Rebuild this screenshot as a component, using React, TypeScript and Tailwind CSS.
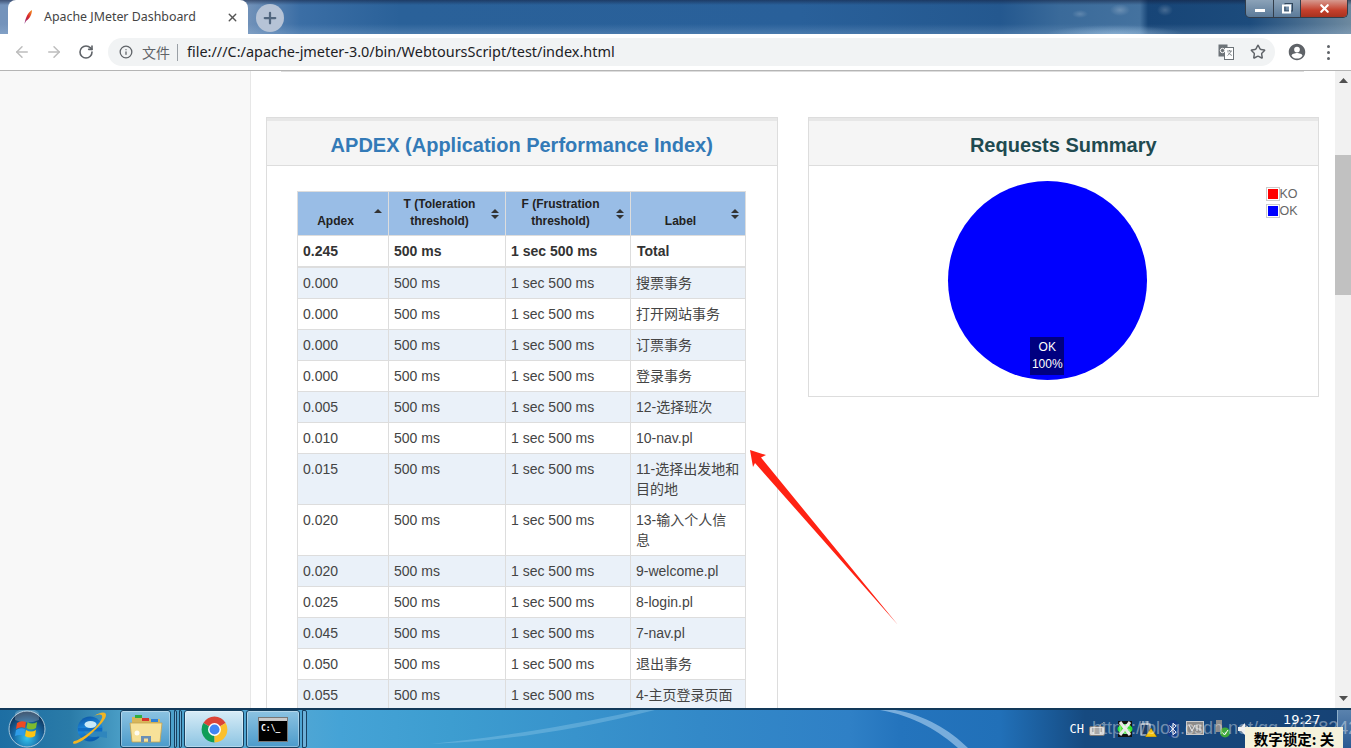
import React from "react";
import { ArrowLeft, ArrowRight, RotateCw, Info, Star, Plus, X } from "lucide-react";

const SANS = "font-['Liberation_Sans','Noto_Sans_CJK_SC',sans-serif]";

const rows: [string, string][] = [
  ["0.000", "搜票事务"],
  ["0.000", "打开网站事务"],
  ["0.000", "订票事务"],
  ["0.000", "登录事务"],
  ["0.005", "12-选择班次"],
  ["0.010", "10-nav.pl"],
  ["0.015", "11-选择出发地和\n目的地"],
  ["0.020", "13-输入个人信\n息"],
  ["0.020", "9-welcome.pl"],
  ["0.025", "8-login.pl"],
  ["0.045", "7-nav.pl"],
  ["0.050", "退出事务"],
  ["0.055", "4-主页登录页面"],
];

function SortIcon({ up }: { up?: boolean }) {
  return (
    <svg width="8" height="12" viewBox="0 0 8 12" className="absolute right-[6px] top-[16px]">
      <path d="M0 5 L4 1 L8 5 Z" fill="#333" />
      {!up && <path d="M0 7 L4 11 L8 7 Z" fill="#333" />}
    </svg>
  );
}

function Th({ children, up }: { children: React.ReactNode; up?: boolean }) {
  return (
    <th className="relative border border-[#ddd] bg-[#99bde6] pb-[5px] pl-[5px] pr-[20px] pt-[4px] text-center align-bottom text-[12px] font-bold leading-[17px] text-[#222]">
      {children}
      <SortIcon up={up} />
    </th>
  );
}

function Panel({ title, titleClass, children }: { title: string; titleClass: string; children: React.ReactNode }) {
  return (
    <div className="border border-[#ddd] bg-white">
      <div className={`h-[48px] border-b border-t-[3px] border-b-[#ddd] border-t-[#e7e7e7] bg-[#f5f5f5] pt-[8px] text-center text-[20px] font-bold leading-[32px] ${titleClass}`}>
        {title}
      </div>
      {children}
    </div>
  );
}

function ApexFeather() {
  return (
    <svg width="10" height="16" viewBox="0 0 10 16">
      <defs>
        <linearGradient id="fe" x1="0" y1="1" x2="1" y2="0">
          <stop offset="0" stopColor="#7b2b8c" />
          <stop offset="0.5" stopColor="#d8242c" />
          <stop offset="1" stopColor="#f59a23" />
        </linearGradient>
      </defs>
      <path d="M1.5 15 C2.5 9 5 3 9 1 C9 5 7 9.5 3 12 Z" fill="url(#fe)" />
    </svg>
  );
}

function Orb() {
  return (
    <svg width="38" height="38" viewBox="0 0 38 38">
      <defs>
        <radialGradient id="orb" cx="0.5" cy="0.75" r="0.7">
          <stop offset="0" stopColor="#35c4ee" />
          <stop offset="0.55" stopColor="#1667a3" />
          <stop offset="1" stopColor="#0f2f52" />
        </radialGradient>
      </defs>
      <circle cx="19" cy="19" r="18" fill="url(#orb)" stroke="#a8c8dc" strokeWidth="1" />
      <path d="M7 3 A18 18 0 0 1 31 3 L31 10 Q19 15 7 10 Z" fill="#fff" opacity="0.22" />
      <path d="M9 13 Q13 10 18 12 L17 18 Q13 16 8 19 Z" fill="#f04a23" />
      <path d="M19.5 12 Q24 15 29 12 L28 18 Q23 21 18.5 18 Z" fill="#7ebb2f" />
      <path d="M8 20 Q13 17 17 19.5 L16 26 Q12 24 7 26 Z" fill="#2f9ce8" />
      <path d="M18 20 Q23 23 28 20 L27 26 Q22 29 17 26 Z" fill="#fdc412" />
    </svg>
  );
}

function IE() {
  return (
    <svg width="36" height="34" viewBox="0 0 36 34">
      <defs>
        <linearGradient id="ieb" x1="0" y1="0" x2="0.3" y2="1">
          <stop offset="0" stopColor="#0b4f9e" />
          <stop offset="0.55" stopColor="#1c8ade" />
          <stop offset="1" stopColor="#0a5db0" />
        </linearGradient>
      </defs>
      <circle cx="19" cy="17" r="12.5" fill="url(#ieb)" />
      <ellipse cx="19.5" cy="12.5" rx="6" ry="3.4" fill="#c9e9f8" />
      <rect x="7" y="16" width="24" height="3.4" fill="#0f6cc4" />
      <path d="M13 19.6 H36 V26 L27 24.5 Q24 25.5 20 24.8 Q15 24 13 19.6 Z" fill="#2f86bd" />
      <path d="M3 29 C-1 34 7 32 15 26 C24 19 35 8 35 3 C35 -1 29 0 23 4 C29 1.5 32 2 31 6 C29 12 20 20 12 25 C8 27.5 3.5 29.5 3 29 Z" fill="#f1b524" />
    </svg>
  );
}

function Folder() {
  return (
    <svg width="34" height="32" viewBox="0 0 34 32">
      <path d="M3 4 H13 L15 6 H31 V14 H3 Z" fill="#d8b65a" />
      <rect x="6" y="2" width="7" height="3" fill="#2fae3f" />
      <rect x="13" y="5" width="7" height="3" fill="#d8342c" />
      <rect x="22" y="6" width="7" height="3" fill="#2f80d8" />
      <path d="M1 10 H33 L31 29 H3 Z" fill="#f7e199" stroke="#c4a24e" strokeWidth="0.8" />
      <path d="M12 29 V23 H22 V29 H19 V25.5 H15 V29 Z" fill="#6a8fb5" />
      <circle cx="8" cy="20" r="2.5" fill="#fff" opacity="0.85" />
    </svg>
  );
}

function ChromeLogo() {
  return (
    <svg width="31" height="31" viewBox="0 0 48 48">
      <path d="M24 24 L6.68 14 A20 20 0 0 1 41.32 14 Z" fill="#db4437" />
      <path d="M24 24 L24 44 A20 20 0 0 1 6.68 14 Z" fill="#0f9d58" />
      <path d="M24 24 L41.32 14 A20 20 0 0 1 24 44 Z" fill="#fbc02d" />
      <circle cx="24" cy="24" r="10" fill="#fff" />
      <circle cx="24" cy="24" r="7.8" fill="#4285f4" />
    </svg>
  );
}

function TaskButton({ w, light, children }: { w: string; light?: boolean; children?: React.ReactNode }) {
  return (
    <div className={`flex h-[38px] items-center justify-center rounded-[3px] border border-[#16405f] shadow-[inset_0_0_0_1px_rgba(255,255,255,0.35)] ${w} ${light ? "bg-[linear-gradient(180deg,#d7ecf7,#8cc4e2)]" : "bg-[linear-gradient(180deg,#8cc3e2,#4c9bcb)]"}`}>
      {children}
    </div>
  );
}

function Tray() {
  return (
    <div className="ml-auto flex h-full items-center">
      <span className="mr-[5px] font-['DejaVu_Sans_Mono',monospace] text-[12px] leading-none text-white">CH</span>
      <svg width="16" height="15" viewBox="0 0 16 15" className="mr-[12px] mt-[1px]">
        <path d="M11 4 C11 1 14 3 15 0" fill="none" stroke="#9a9a9a" />
        <rect x="0.5" y="4.5" width="15" height="9" rx="1.5" fill="#d8d8d8" stroke="#777" />
        <path d="M3 7 H13 M3 9 H13 M5 11 H11" stroke="#777" />
      </svg>
      <svg width="16" height="16" viewBox="0 0 16 16" className="mr-[7px]">
        <rect x="1" y="0" width="14" height="16" fill="#111" />
        <ellipse cx="8" cy="8" rx="7.5" ry="5" fill="#2fe12f" />
        <path d="M3 1 L13 14 M13 1 L3 14" stroke="#e6e6e6" strokeWidth="3" />
      </svg>
      <svg width="18" height="16" viewBox="0 0 18 16" className="mr-[7px]">
        <rect x="1" y="3" width="9" height="11" fill="#1b3a63" stroke="#eee" />
        <path d="M3 0 V4 M7 0 V4" stroke="#eee" />
        <path d="M11 7 L17 16 H5 Z" fill="#f4c20d" stroke="#5a4a10" strokeWidth="0.5" />
      </svg>
      <svg width="16" height="18" viewBox="0 0 16 18" className="mr-[5px]">
        <ellipse cx="8" cy="9" rx="7" ry="9" fill="#153c86" />
        <path d="M4.5 5.5 L11 12 L8 15 V3 L11 6 L4.5 12.5" fill="none" stroke="#dde" strokeWidth="1" />
      </svg>
      <svg width="18" height="16" viewBox="0 0 18 16" className="mr-[10px]">
        <rect x="0.5" y="0.5" width="17" height="13" fill="#8b8b8b" stroke="#c9c9c9" />
        <path d="M3 4 L6 10 L9 4 M11 10 V4 M14 10 V4" stroke="#eee" fill="none" />
      </svg>
      <svg width="18" height="18" viewBox="0 0 18 18" className="mr-[5px]">
        <rect x="2" y="0" width="6" height="12" fill="#8d8d8d" />
        <circle cx="11" cy="12.5" r="5" fill="#3fa83a" />
        <path d="M8.5 12.5 L10.5 15 L14 10" fill="none" stroke="#fff" />
      </svg>
      <svg width="16" height="14" viewBox="0 0 16 14" className="mr-[98px]">
        <path d="M1 5 H4 L8 1 V13 L4 9 H1 Z" fill="#eee" />
        <path d="M10 4 Q12 7 10 10" stroke="#eee" fill="none" />
      </svg>
    </div>
  );
}

export default function App() {
  return (
    <div className={`relative flex h-[748px] w-[1351px] flex-col overflow-hidden bg-white ${SANS}`}>
      {/* Title bar with tab strip */}
      <div className="flex h-[34px] shrink-0 bg-[linear-gradient(180deg,rgba(20,30,60,0.55)_0px,transparent_5px,transparent_24px,rgba(170,200,230,0.25)_34px),radial-gradient(ellipse_10px_6px_at_1120px_10px,rgba(255,255,255,0.22),transparent),radial-gradient(ellipse_8px_6px_at_1165px_10px,rgba(255,255,255,0.2),transparent),radial-gradient(ellipse_8px_4px_at_1080px_14px,rgba(255,255,255,0.18),transparent),radial-gradient(ellipse_70px_10px_at_1115px_35px,rgba(170,205,235,0.6),transparent),linear-gradient(90deg,#7493bb_0px,#6f90b8_250px,#3b6ea5_300px,#2a6199_400px,#29609a_800px,#24588f_1000px,#3a6a9a_1060px,#44729f_1140px,#174577_1148px,#1c4b7c_1250px,#6d899f_1351px)]">
        <div className="ml-[8px] flex h-[34px] w-[240px] shrink-0 items-center rounded-t-[8px] bg-white pl-[15px] pr-[9px]">
          <ApexFeather />
          <span className="ml-[11px] font-['Noto_Sans',sans-serif] text-[12.4px] text-[#444]">Apache JMeter Dashboard</span>
          <X size={13} strokeWidth={2.5} className="ml-auto text-[#555]" />
        </div>
        <div className="ml-[8px] mt-[4px] flex h-[28px] w-[28px] items-center justify-center rounded-full bg-[#b6c3d6]">
          <Plus size={18} strokeWidth={3} className="text-[#51667f]" />
        </div>
        <div className="ml-auto mr-[3px] flex h-[18px] w-[103px] overflow-hidden rounded-b-[5px] border border-t-0 border-[#333d4a]">
          <div className="flex w-[28px] items-center justify-center border-r border-[#333d4a] bg-[linear-gradient(180deg,#8ba2b8,#5b7a99)]">
            <div className="mt-[3px] h-[3px] w-[10px] bg-white" />
          </div>
          <div className="flex w-[27px] items-center justify-center border-r border-[#333d4a] bg-[linear-gradient(180deg,#8ba2b8,#5b7a99)]">
            <svg width="11" height="11" viewBox="0 0 11 11">
              <rect x="3" y="0.5" width="7.5" height="7.5" fill="none" stroke="#33475c" />
              <rect x="1" y="2.5" width="7" height="7" fill="none" stroke="#fff" strokeWidth="2" />
            </svg>
          </div>
          <div className="flex flex-1 items-center justify-center bg-[linear-gradient(180deg,#d69a90,#c5402c_60%,#a8321f)]">
            <X size={13} strokeWidth={4} className="text-white" />
          </div>
        </div>
      </div>

      {/* Toolbar */}
      <div className="flex h-[37px] shrink-0 items-center border-b border-[#b5b5b5] bg-white">
        <ArrowLeft size={18} strokeWidth={2} className="ml-[13px] text-[#bdbdbd]" />
        <ArrowRight size={18} strokeWidth={2} className="ml-[14px] text-[#bdbdbd]" />
        <RotateCw size={16} strokeWidth={2.4} className="ml-[15px] text-[#5f6368]" />
        <div className="ml-[14px] flex h-[28px] w-[1167px] items-center rounded-full bg-[#f1f3f4] pl-[11px] pr-[9px]">
          <Info size={14} strokeWidth={2.2} className="text-[#5f6368]" />
          <span className="ml-[9px] font-['Noto_Sans_CJK_SC',sans-serif] text-[14px] text-[#5f6368]">文件</span>
          <div className="ml-[7px] h-[17px] w-px bg-[#9aa0a6]" />
          <span className="ml-[9px] font-['Noto_Sans',sans-serif] text-[14.44px] text-[#202124]">file:///C:/apache-jmeter-3.0/bin/WebtoursScript/test/index.html</span>
          <svg width="16" height="16" viewBox="0 0 16 16" className="ml-auto">
            <rect x="0.5" y="0.5" width="9" height="12" fill="#6d7378" />
            <rect x="6.5" y="3.5" width="9" height="12" fill="#fff" stroke="#6d7378" />
            <circle cx="4.5" cy="6.5" r="2.2" fill="none" stroke="#fff" />
            <path d="M9 7 H14 M11.5 6 V7 M13 7 Q12 10 9.5 11.5 M10 8.5 Q11.5 10.5 14 11.5" stroke="#6d7378" fill="none" strokeWidth="0.8" />
          </svg>
          <Star size={16} strokeWidth={2.2} className="ml-[16px] text-[#5f6368]" />
        </div>
        <svg width="18" height="18" viewBox="0 0 24 24" className="ml-[13px]">
          <path fill="#5f6368" d="M12 1C5.9 1 1 5.9 1 12s4.9 11 11 11 11-4.9 11-11S18.1 1 12 1zm0 4a3.8 3.8 0 1 1 0 7.6A3.8 3.8 0 0 1 12 5zm0 15.8c-3 0-5.7-1.5-7.3-3.9 0-2.4 4.9-3.7 7.3-3.7s7.3 1.3 7.3 3.7c-1.6 2.4-4.3 3.9-7.3 3.9z" />
        </svg>
        <div className="ml-[21px] flex flex-col gap-[3px]">
          <div className="h-[3px] w-[3px] rounded-full bg-[#5f6368]" />
          <div className="h-[3px] w-[3px] rounded-full bg-[#5f6368]" />
          <div className="h-[3px] w-[3px] rounded-full bg-[#5f6368]" />
        </div>
      </div>

      {/* Page */}
      <div className="flex min-h-0 flex-1">
        <div className="w-[251px] shrink-0 border-r border-[#e7e7e7] bg-[#f8f8f8]" />
        <div className="min-w-0 flex-1 overflow-hidden pl-[15px] pr-[16px]">
          <div className="mx-[15px] h-px bg-[#ddd]" />
          <div className="mt-[45px] grid grid-cols-2 items-start gap-[30px]">
            <Panel title="APDEX (Application Performance Index)" titleClass="text-[#337ab7]">
              <div className="px-[30px] pt-[25px]">
                <table className="w-[448px] table-fixed border-collapse text-[14px] leading-[20px] text-[#444]">
                  <colgroup>
                    <col className="w-[91px]" />
                    <col className="w-[117px]" />
                    <col className="w-[125px]" />
                    <col className="w-[115px]" />
                  </colgroup>
                  <thead>
                    <tr>
                      <Th up>Apdex</Th>
                      <Th>T (Toleration threshold)</Th>
                      <Th>F (Frustration threshold)</Th>
                      <Th>Label</Th>
                    </tr>
                  </thead>
                  <tbody>
                    <tr className="font-bold text-[#333]">
                      <td className="border border-b-2 border-[#ddd] px-[5px] py-[5px] align-top">0.245</td>
                      <td className="border border-b-2 border-[#ddd] px-[5px] py-[5px] align-top">500 ms</td>
                      <td className="border border-b-2 border-[#ddd] px-[5px] py-[5px] align-top">1 sec 500 ms</td>
                      <td className="border border-b-2 border-[#ddd] px-[6px] py-[5px] align-top">Total</td>
                    </tr>
                    {rows.map(([a, label], i) => (
                      <tr key={i} className={i % 2 === 0 ? "bg-[#eaf1f9]" : "bg-white"}>
                        <td className="border border-[#ddd] px-[5px] py-[5px] align-top">{a}</td>
                        <td className="border border-[#ddd] px-[5px] py-[5px] align-top">500 ms</td>
                        <td className="border border-[#ddd] px-[5px] py-[5px] align-top">1 sec 500 ms</td>
                        <td className="whitespace-pre border border-[#ddd] px-[5px] py-[5px] align-top">{label}</td>
                      </tr>
                    ))}
                  </tbody>
                </table>
              </div>
            </Panel>
            <Panel title="Requests Summary" titleClass="text-[#1f4a50]">
              <div className="relative flex h-[230px] items-start justify-center pt-[15px]">
                <div className="ml-[-32px] flex h-[199px] w-[199px] flex-col items-center justify-end rounded-full bg-[#0000ff] pb-[5px]">
                  <div className="flex h-[38px] w-[34px] flex-col items-center justify-center bg-[#000080] text-[12px] leading-[17px] text-white">
                    <span>OK</span>
                    <span>100%</span>
                  </div>
                </div>
                <div className="absolute left-[457px] top-[21px] flex flex-col gap-[3px] text-[12.5px] leading-[14px] text-[#666]">
                  <div className="flex items-center">
                    <div className="h-[14px] w-[14px] border border-[#ccc] bg-white p-px"><div className="h-full w-full bg-[#ff0000]" /></div>
                    <span>KO</span>
                  </div>
                  <div className="flex items-center">
                    <div className="h-[14px] w-[14px] border border-[#ccc] bg-white p-px"><div className="h-full w-full bg-[#0000ff]" /></div>
                    <span>OK</span>
                  </div>
                </div>
              </div>
            </Panel>
          </div>
        </div>
        {/* Scrollbar */}
        <div className="flex w-[16px] shrink-0 flex-col items-center bg-[#f1f1f1]">
          <svg width="9" height="5" viewBox="0 0 9 5" className="mt-[7px]"><path d="M0 5 L4.5 0 L9 5 Z" fill="#505050" /></svg>
          <div className="mt-[72px] h-[140px] w-full bg-[#c1c1c1]" />
          <svg width="9" height="5" viewBox="0 0 9 5" className="mb-[7px] mt-auto"><path d="M0 0 L4.5 5 L9 0 Z" fill="#505050" /></svg>
        </div>
      </div>

      {/* Taskbar */}
      <div className="relative flex h-[40px] shrink-0 items-center border-t-[2px] border-[#12395a] bg-[linear-gradient(90deg,#1d6ea3_0px,#2a7ba8_70px,#4ca0c8_125px,#4fa6d4_300px,#45a3d6_340px,#3d9dd0_450px,#3389c8_700px,#2f80c6_850px,#2474bd_900px,#2170b8_1000px,#1a5a98_1050px,#164a80_1085px,#164275_1351px)]">
        {/* Wallpaper streaks seen through the glass */}
        <svg width="1351" height="38" viewBox="0 0 1351 38" className="pointer-events-none absolute left-0 top-0">
          <path d="M880 0 C915 6 940 22 958 38 L968 38 C950 20 925 5 895 0 Z" fill="#9cc6ea" opacity="0.7" />
          <path d="M430 34 C490 28 560 18 640 0 L655 0 C570 22 490 32 430 34 Z" fill="#8ec8e8" opacity="0.4" />
        </svg>
        <div className="relative ml-[8px] flex w-[38px] items-center justify-center"><Orb /></div>
        <div className="relative ml-[25px] flex w-[36px] items-center justify-center"><IE /></div>
        <div className="relative ml-[13px]">
          <TaskButton w="w-[51px]"><Folder /></TaskButton>
        </div>
        <div className="relative ml-[3px] h-[38px] w-[3px] rounded-r-[2px] border border-[#16405f] bg-[#6cb0d8]" />
        <div className="relative ml-[2px] h-[38px] w-[3px] rounded-r-[2px] border border-[#16405f] bg-[#6cb0d8]" />
        <div className="relative ml-[2px]">
          <TaskButton w="w-[60px]" light><ChromeLogo /></TaskButton>
        </div>
        <div className="relative ml-[2px]">
          <TaskButton w="w-[54px]">
            <div className="flex h-[25px] w-[30px] flex-col border border-[#777] bg-black">
              <div className="h-[3px] bg-[#c9c9c9]" />
              <span className="ml-[2px] mt-[3px] font-['DejaVu_Sans_Mono',monospace] text-[8px] font-bold leading-[10px] text-white">C:\_</span>
            </div>
          </TaskButton>
        </div>
        <div className="relative ml-[2px] h-[38px] w-[5px] rounded-r-[2px] border border-[#16405f] bg-[#6cb0d8]" />
        <Tray />
        <span className="absolute left-[1283px] top-[2px] font-['DejaVu_Sans',sans-serif] text-[13px] leading-[15px] text-white">19:27</span>
        <div className="absolute right-0 top-0 h-[38px] w-[14px] border-l border-[#8fb0cc] bg-[linear-gradient(180deg,#5a82ad,#2a5a92)]" />
        {/* Watermark */}
        <span className="pointer-events-none absolute left-[1092px] top-[8px] whitespace-nowrap font-['Liberation_Sans',sans-serif] text-[18px] leading-[20px] text-white/40">https://blog.csdn.net/qq_41782425</span>
        {/* Num lock tooltip */}
        <div className="absolute left-[1245px] top-[17px] flex h-[23px] w-[98px] items-center justify-center bg-[#f5f2dc] font-['Noto_Sans_CJK_SC',serif] text-[14.5px] font-bold text-black">
          数字锁定: 关
        </div>
      </div>

      {/* Red annotation arrow */}
      <svg width="1351" height="748" viewBox="0 0 1351 748" className="pointer-events-none absolute left-0 top-0">
        <polygon points="750,450 766,455 761,457.5 898,625 755,463 753,467" fill="#ff2213" />
      </svg>
    </div>
  );
}
